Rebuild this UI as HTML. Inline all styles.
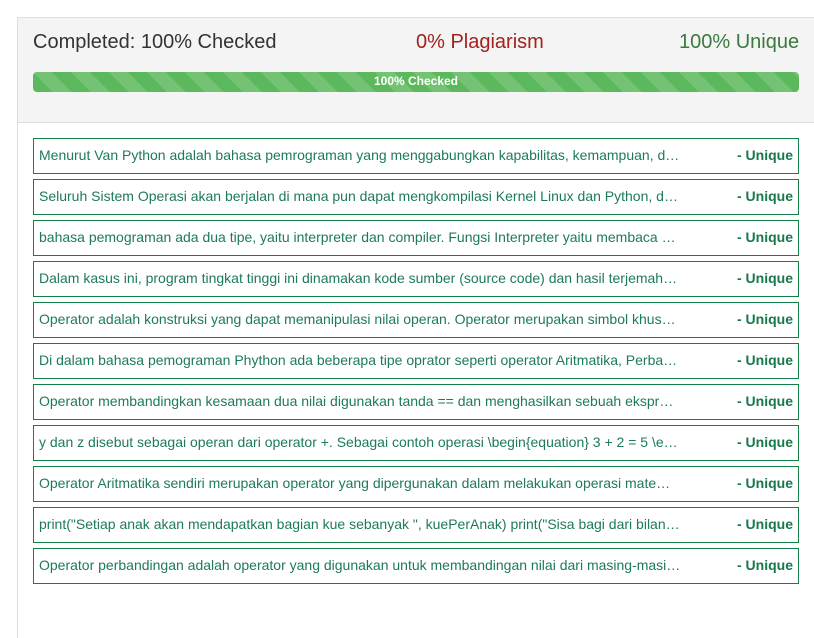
<!DOCTYPE html>
<html><head><meta charset="utf-8"><style>
html,body{margin:0;padding:0;background:#fff;width:814px;height:603px;overflow:hidden;font-family:"Liberation Sans",Arial,sans-serif;}
.panel{position:absolute;left:17px;top:17px;width:820px;height:620px;border-left:1px solid #ddd;border-top:1px solid #ddd;}
.head{position:absolute;left:0;top:0;width:100%;height:104px;background:#f4f4f4;border-bottom:1px solid #ddd;}
.t{position:absolute;top:12px;font-size:20px;line-height:24px;}
.bar{position:absolute;left:15px;top:54px;width:766px;height:20px;border-radius:4px;background-color:#5cb85c;
background-image:linear-gradient(45deg,rgba(255,255,255,.15) 25%,transparent 25%,transparent 50%,rgba(255,255,255,.15) 50%,rgba(255,255,255,.15) 75%,transparent 75%,transparent);background-size:38px 38px;color:#fff;font-size:12px;font-weight:bold;text-align:center;line-height:19px;}
.row{position:absolute;left:15px;width:764px;height:34px;border:1px solid #138048;}
.row .x{position:absolute;left:5px;top:0;width:642px;line-height:32px;font-size:14px;color:#1d7a5c;white-space:nowrap;overflow:hidden;text-overflow:ellipsis;}
.row .u{position:absolute;right:5px;top:0;line-height:32px;font-size:14px;font-weight:bold;color:#17784a;}
</style></head><body>
<div class="panel">
<div class="head">
<div class="t" style="left:15px;color:#333">Completed: 100% Checked</div>
<div class="t" style="left:398px;color:#a3221f">0% Plagiarism</div>
<div class="t" style="left:661px;color:#3b7a3c">100% Unique</div>
<div class="bar">100% Checked</div>
</div>
<div class="row" style="top:120px"><div class="x">Menurut Van Python adalah bahasa pemrograman yang menggabungkan kapabilitas, kemampuan, dan sintaksis yang jelas</div><div class="u">- Unique</div></div>
<div class="row" style="top:161px"><div class="x">Seluruh Sistem Operasi akan berjalan di mana pun dapat mengkompilasi Kernel Linux dan Python, dan lainnya</div><div class="u">- Unique</div></div>
<div class="row" style="top:202px"><div class="x">bahasa pemograman ada dua tipe, yaitu interpreter dan compiler. Fungsi Interpreter yaitu membaca program</div><div class="u">- Unique</div></div>
<div class="row" style="top:243px"><div class="x">Dalam kasus ini, program tingkat tinggi ini dinamakan kode sumber (source code) dan hasil terjemahannya</div><div class="u">- Unique</div></div>
<div class="row" style="top:284px"><div class="x">Operator adalah konstruksi yang dapat memanipulasi nilai operan. Operator merupakan simbol khusus yang</div><div class="u">- Unique</div></div>
<div class="row" style="top:325px"><div class="x">Di dalam bahasa pemograman Phython ada beberapa tipe oprator seperti operator Aritmatika, Perbandingan</div><div class="u">- Unique</div></div>
<div class="row" style="top:366px"><div class="x">Operator membandingkan kesamaan dua nilai digunakan tanda == dan menghasilkan sebuah ekspresi boolean</div><div class="u">- Unique</div></div>
<div class="row" style="top:407px"><div class="x">y dan z disebut sebagai operan dari operator +. Sebagai contoh operasi \begin{equation} 3 + 2 = 5 \end{equation}</div><div class="u">- Unique</div></div>
<div class="row" style="top:448px"><div class="x">Operator Aritmatika sendiri merupakan operator yang dipergunakan dalam melakukan operasi matematika</div><div class="u">- Unique</div></div>
<div class="row" style="top:489px"><div class="x">print("Setiap anak akan mendapatkan bagian kue sebanyak ", kuePerAnak) print("Sisa bagi dari bilangan</div><div class="u">- Unique</div></div>
<div class="row" style="top:530px"><div class="x">Operator perbandingan adalah operator yang digunakan untuk membandingan nilai dari masing-masing operan</div><div class="u">- Unique</div></div>
</div>
</body></html>
